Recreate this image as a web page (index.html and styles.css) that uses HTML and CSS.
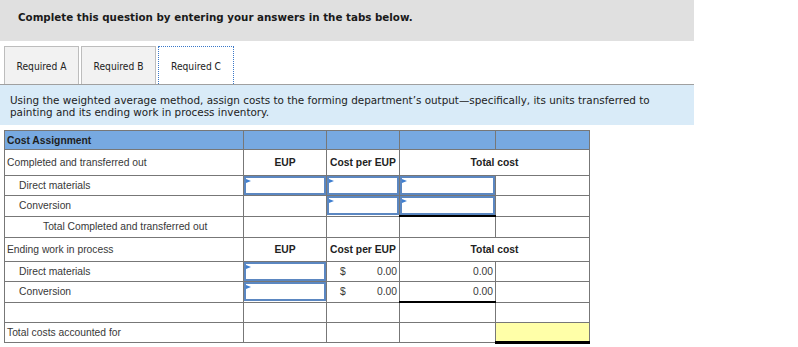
FILE: index.html
```html
<!DOCTYPE html>
<html lang="en">
<head>
<meta charset="utf-8">
<title>Cost Assignment</title>
<link rel="stylesheet" href="styles.css">
</head>
<body>
<div class="question">
  <div class="prompt">Complete this question by entering your answers in the tabs below.</div>

  <div class="tabs">
    <button class="tab">Required A</button>
    <button class="tab">Required B</button>
    <button class="tab active">Required C</button>
  </div>

  <div class="instructions">Using the weighted average method, assign costs to the forming department’s output—specifically, its units transferred to painting and its ending work in process inventory.</div>

  <table class="sheet">
    <colgroup>
      <col class="c-label">
      <col class="c-eup">
      <col class="c-rate">
      <col class="c-total">
      <col class="c-grand">
    </colgroup>
    <tr class="r-head">
      <td class="title">Cost Assignment</td>
      <td></td><td></td><td></td><td></td>
    </tr>
    <tr class="r-section">
      <td>Completed and transferred out</td>
      <td class="colhead">EUP</td>
      <td class="colhead">Cost per EUP</td>
      <td class="colhead" colspan="2">Total cost</td>
    </tr>
    <tr class="r-line">
      <td class="indent">Direct materials</td>
      <td class="entry"><div class="field"></div></td>
      <td class="entry"><div class="field"></div></td>
      <td class="entry"><div class="field"></div></td>
      <td></td>
    </tr>
    <tr class="r-line">
      <td class="indent">Conversion</td>
      <td></td>
      <td class="entry"><div class="field"></div></td>
      <td class="entry sum"><div class="field"></div></td>
      <td></td>
    </tr>
    <tr class="r-total">
      <td class="indent2">Total Completed and transferred out</td>
      <td></td><td></td><td></td><td></td>
    </tr>
    <tr class="r-section r-section2">
      <td>Ending work in process</td>
      <td class="colhead">EUP</td>
      <td class="colhead">Cost per EUP</td>
      <td class="colhead" colspan="2">Total cost</td>
    </tr>
    <tr class="r-line">
      <td class="indent">Direct materials</td>
      <td class="entry"><div class="field"></div></td>
      <td class="money"><span class="cur">$</span><span>0.00</span></td>
      <td class="num">0.00</td>
      <td></td>
    </tr>
    <tr class="r-line">
      <td class="indent">Conversion</td>
      <td class="entry"><div class="field"></div></td>
      <td class="money"><span class="cur">$</span><span>0.00</span></td>
      <td class="num sum">0.00</td>
      <td></td>
    </tr>
    <tr class="r-blank">
      <td></td><td></td><td></td><td></td><td></td>
    </tr>
    <tr class="r-final">
      <td>Total costs accounted for</td>
      <td></td><td></td><td></td>
      <td class="grand"></td>
    </tr>
  </table>
</div>
</body>
</html>
```

FILE: styles.css
```css
html, body {
  margin: 0;
  padding: 0;
  background: #fff;
}

body {
  font-family: "DejaVu Sans", Verdana, sans-serif;
  color: #222;
}

.question {
  width: 694px;
}

/* grey banner with the task prompt */
.prompt {
  background: #e0e0e0;
  height: 41px;
  box-sizing: border-box;
  padding: 11px 0 0 18px;
  font-size: 10.3px;
  font-weight: bold;
  color: #1a1a1a;
}

/* tab strip */
.tabs {
  display: flex;
  gap: 2px;
  padding: 5px 0 0 4px;
  border-bottom: 1px solid #a0a0a0;
}

.tab {
  width: 75px;
  height: 38px;
  margin: 0;
  padding: 2px 0 0;
  background: #f2f2f2;
  border: 1px solid #bdbdbd;
  border-bottom: none;
  font-family: "DejaVu Sans Condensed", "DejaVu Sans", sans-serif;
  font-size: 10.2px;
  color: #222;
}

.tab.active {
  width: 76px;
  background: #fff;
  border: 1px dotted #3a78c8;
  border-bottom: none;
}

/* instructions band */
.instructions {
  background: #d9ebf8;
  height: 40px;
  box-sizing: border-box;
  padding: 9px 20px 0 10px;
  font-size: 10.4px;
  line-height: 12px;
  color: #222;
}

/* worksheet */
.sheet {
  margin: 5px 0 0 4px;
  border-collapse: collapse;
  table-layout: fixed;
  font-family: "Liberation Sans", Arial, sans-serif;
  font-size: 10.3px;
  color: #383838;
}

.sheet td {
  border: 1px solid #777;
  padding: 0 2px;
  vertical-align: middle;
  white-space: nowrap;
}

.c-label { width: 239px; }
.c-eup { width: 83px; }
.c-rate { width: 73px; }
.c-total { width: 96px; }
.c-grand { width: 94px; }

.r-head td {
  background: #77a9e1;
  height: 18px;
}

.sheet td.title {
  font-weight: bold;
  color: #1e1e1e;
}

.r-section td { height: 25px; }
.r-section2 td { height: 23px; }
.r-line td { height: 19px; }
.r-total td { height: 20px; }
.r-blank td { height: 19px; }
.r-final td { height: 18px; }

.sheet td.indent { padding-left: 14px; }
.sheet td.indent2 { padding-left: 38px; }

.sheet td.colhead {
  text-align: center;
  font-weight: bold;
  color: #222;
}

/* editable input cells */
.sheet td.entry { padding: 0; }

.field {
  position: relative;
  height: 19px;
  box-sizing: border-box;
  border: 2px solid #5b87c1;
  background: #fff;
}

.field::before {
  content: "";
  position: absolute;
  left: 0;
  top: 1px;
  border-left: 5px solid #3f7fd0;
  border-top: 2px solid transparent;
  border-bottom: 2px solid transparent;
}

.sheet td.money {
  padding: 0 2px 0 13px;
  text-align: right;
}

.money .cur {
  float: left;
}

.sheet td.num { text-align: right; }

.sheet td.sum { border-bottom: 2px solid #000; }

.sheet td.grand {
  background: #ffffa8;
  border-top: 1px solid #000;
  border-bottom: 3px solid #000;
}
```
